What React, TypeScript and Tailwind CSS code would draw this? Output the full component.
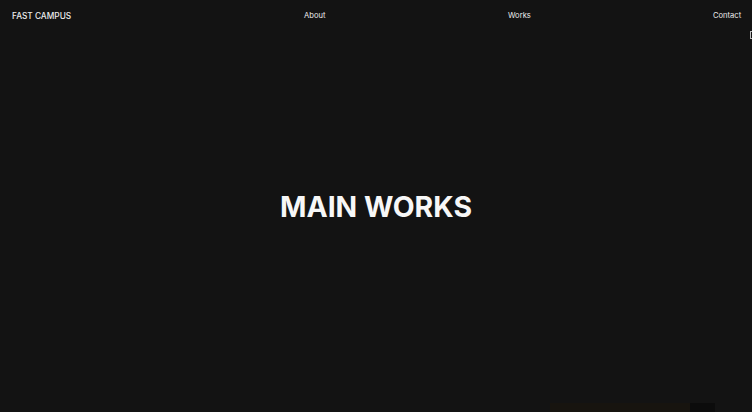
const NAV = ['About', 'Works', 'Contact']

export default function App() {
  return (
    <div
      className="relative flex h-[412px] w-[752px] flex-col overflow-hidden bg-[#131313] text-white"
      style={{ fontFamily: 'Inter, "Noto Sans", sans-serif' }}
    >
      {/* Header */}
      <header className="grid grid-cols-[292px_204px_205px_1fr] px-3 pt-[10px] leading-[12px] text-[#ececec]">
        <a className="text-[8.3px] font-medium">FAST CAMPUS</a>
        {NAV.map((item) => (
          <a key={item} className="text-[7.6px] font-normal">
            {item}
          </a>
        ))}
      </header>

      {/* Hero */}
      <main className="flex flex-1 items-center justify-center pb-[20px]">
        <h1 className="text-[28.4px] font-bold leading-none text-[#f7f7f7]">
          MAIN WORKS
        </h1>
      </main>

      {/* cut-off cursor box on the right edge */}
      <span className="absolute left-[750px] top-[31px] h-[8px] w-[8px] border border-[#bdbdbd]" />

      {/* faint strip at the bottom */}
      <div className="absolute bottom-0 left-[550px] h-[9px] w-[140px] bg-[#17140f]" />
      <div className="absolute bottom-0 left-[690px] h-[9px] w-[25px] bg-[#0c0c0c]" />
    </div>
  )
}
